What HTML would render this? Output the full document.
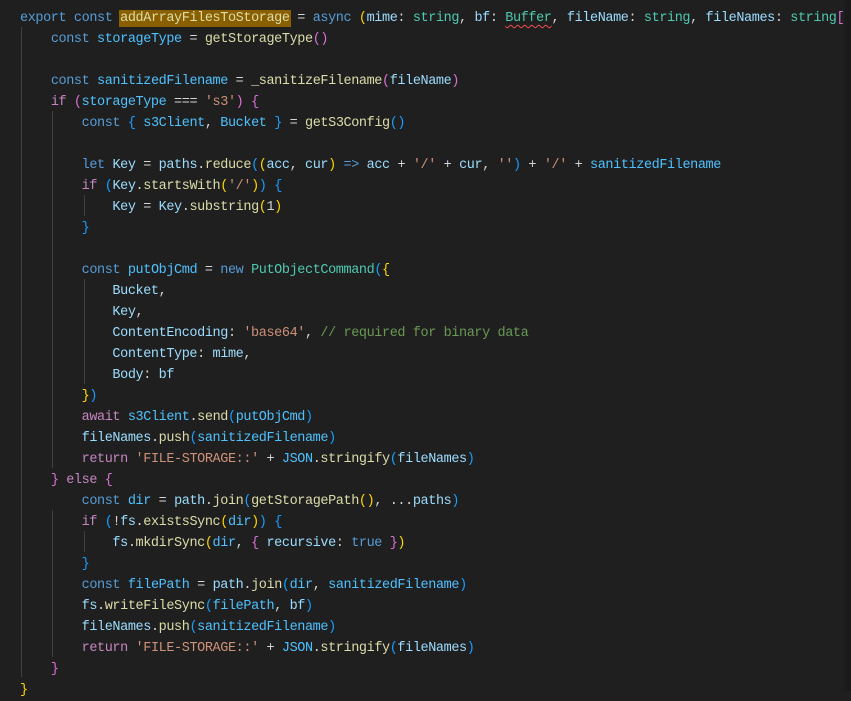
<!DOCTYPE html>
<html><head><meta charset="utf-8"><style>
html,body{margin:0;padding:0;background:#1f1f1f;width:851px;height:691px;overflow:hidden}
pre{margin:0;position:absolute;left:20px;top:8px;font-family:"Liberation Mono",monospace;font-size:13.5px;letter-spacing:-0.4px;line-height:21px;color:#d4d4d4;white-space:pre}
.k{color:#569cd6}.c{color:#c586c0}.v{color:#9cdcfe}.n{color:#4fc1ff}.f{color:#dcdcaa}.s{color:#ce9178}.t{color:#4ec9b0}.m{color:#6a9955}
.b1{color:#ffd700}.b2{color:#da70d6}.b3{color:#179fff}
.hl{background:#8a5f00;outline:1px solid #8a5f00}
.sq{text-decoration:underline wavy #f14c4c;text-decoration-thickness:1px;text-underline-offset:3px}
.g{position:absolute;width:1px;background:#404040}
.sb{position:absolute;right:0;top:0;width:6px;height:691px;background:#1a1a1a}
</style></head><body>
<div class="g" style="left:21px;top:27px;height:650px"></div>
<div class="g" style="left:52px;top:111px;height:357px"></div>
<div class="g" style="left:52px;top:510px;height:147px"></div>
<div class="g" style="left:84px;top:195px;height:21px"></div>
<div class="g" style="left:84px;top:279px;height:105px"></div>
<div class="g" style="left:84px;top:531px;height:21px"></div>
<pre><span class="k">export</span> <span class="k">const</span> <span class="f hl">addArrayFilesToStorage</span> = <span class="k">async</span> <span class="b1">(</span><span class="v">mime</span>: <span class="t">string</span>, <span class="v">bf</span>: <span class="t sq">Buffer</span>, <span class="v">fileName</span>: <span class="t">string</span>, <span class="v">fileNames</span>: <span class="t">string</span><span class="b2">[</span>
    <span class="k">const</span> <span class="n">storageType</span> = <span class="f">getStorageType</span><span class="b2">()</span>

    <span class="k">const</span> <span class="n">sanitizedFilename</span> = <span class="f">_sanitizeFilename</span><span class="b2">(</span><span class="v">fileName</span><span class="b2">)</span>
    <span class="c">if</span> <span class="b2">(</span><span class="n">storageType</span> === <span class="s">'s3'</span><span class="b2">)</span> <span class="b2">{</span>
        <span class="k">const</span> <span class="b3">{</span> <span class="n">s3Client</span>, <span class="n">Bucket</span> <span class="b3">}</span> = <span class="f">getS3Config</span><span class="b3">()</span>

        <span class="k">let</span> <span class="v">Key</span> = <span class="v">paths</span>.<span class="f">reduce</span><span class="b3">(</span><span class="b1">(</span><span class="v">acc</span>, <span class="v">cur</span><span class="b1">)</span> <span class="k">=&gt;</span> <span class="v">acc</span> + <span class="s">'/'</span> + <span class="v">cur</span>, <span class="s">''</span><span class="b3">)</span> + <span class="s">'/'</span> + <span class="n">sanitizedFilename</span>
        <span class="c">if</span> <span class="b3">(</span><span class="v">Key</span>.<span class="f">startsWith</span><span class="b1">(</span><span class="s">'/'</span><span class="b1">)</span><span class="b3">)</span> <span class="b3">{</span>
            <span class="v">Key</span> = <span class="v">Key</span>.<span class="f">substring</span><span class="b1">(</span>1<span class="b1">)</span>
        <span class="b3">}</span>

        <span class="k">const</span> <span class="n">putObjCmd</span> = <span class="k">new</span> <span class="t">PutObjectCommand</span><span class="b3">(</span><span class="b1">{</span>
            <span class="v">Bucket</span>,
            <span class="v">Key</span>,
            <span class="v">ContentEncoding</span>: <span class="s">'base64'</span>, <span class="m">// required for binary data</span>
            <span class="v">ContentType</span>: <span class="v">mime</span>,
            <span class="v">Body</span>: <span class="v">bf</span>
        <span class="b1">}</span><span class="b3">)</span>
        <span class="c">await</span> <span class="n">s3Client</span>.<span class="f">send</span><span class="b3">(</span><span class="n">putObjCmd</span><span class="b3">)</span>
        <span class="v">fileNames</span>.<span class="f">push</span><span class="b3">(</span><span class="n">sanitizedFilename</span><span class="b3">)</span>
        <span class="c">return</span> <span class="s">'FILE-STORAGE::'</span> + <span class="n">JSON</span>.<span class="f">stringify</span><span class="b3">(</span><span class="v">fileNames</span><span class="b3">)</span>
    <span class="b2">}</span> <span class="c">else</span> <span class="b2">{</span>
        <span class="k">const</span> <span class="n">dir</span> = <span class="v">path</span>.<span class="f">join</span><span class="b3">(</span><span class="f">getStoragePath</span><span class="b1">()</span>, ...<span class="v">paths</span><span class="b3">)</span>
        <span class="c">if</span> <span class="b3">(</span>!<span class="v">fs</span>.<span class="f">existsSync</span><span class="b1">(</span><span class="n">dir</span><span class="b1">)</span><span class="b3">)</span> <span class="b3">{</span>
            <span class="v">fs</span>.<span class="f">mkdirSync</span><span class="b1">(</span><span class="n">dir</span>, <span class="b2">{</span> <span class="v">recursive</span>: <span class="k">true</span> <span class="b2">}</span><span class="b1">)</span>
        <span class="b3">}</span>
        <span class="k">const</span> <span class="n">filePath</span> = <span class="v">path</span>.<span class="f">join</span><span class="b3">(</span><span class="n">dir</span>, <span class="n">sanitizedFilename</span><span class="b3">)</span>
        <span class="v">fs</span>.<span class="f">writeFileSync</span><span class="b3">(</span><span class="n">filePath</span>, <span class="v">bf</span><span class="b3">)</span>
        <span class="v">fileNames</span>.<span class="f">push</span><span class="b3">(</span><span class="n">sanitizedFilename</span><span class="b3">)</span>
        <span class="c">return</span> <span class="s">'FILE-STORAGE::'</span> + <span class="n">JSON</span>.<span class="f">stringify</span><span class="b3">(</span><span class="v">fileNames</span><span class="b3">)</span>
    <span class="b2">}</span>
<span class="b1">}</span></pre>
<div class="sb"></div>
</body></html>
